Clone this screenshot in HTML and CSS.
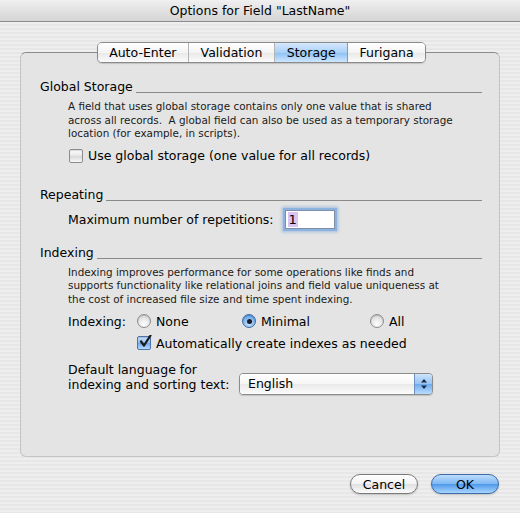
FILE: index.html
```html
<!DOCTYPE html>
<html lang="en">
<head>
    <meta charset="UTF-8">
    <title>Options for Field "LastName"</title>
    <link rel="stylesheet" href="styles.css">
</head>
<body>
    <div class="window">
        <div class="titlebar">Options for Field "LastName"</div>

        <div class="content">
            <div class="panel">
                <div class="tabs">
                    <div class="tab">Auto-Enter</div>
                    <div class="tab">Validation</div>
                    <div class="tab active">Storage</div>
                    <div class="tab">Furigana</div>
                </div>

                <div class="group-title"><span>Global Storage</span><div class="rule"></div></div>
                <p class="note">A field that uses global storage contains only one value that is shared across all records.&nbsp; A global field can also be used as a temporary storage location (for example, in scripts).</p>
                <label class="check-row first">
                    <span class="checkbox"></span>
                    Use global storage (one value for all records)
                </label>

                <div class="group-title repeating"><span>Repeating</span><div class="rule"></div></div>
                <div class="reps-row">
                    <span>Maximum number of repetitions:</span>
                    <div class="num-input"><span class="sel">1</span></div>
                </div>

                <div class="group-title indexing"><span>Indexing</span><div class="rule"></div></div>
                <p class="note">Indexing improves performance for some operations like finds and supports functionality like relational joins and field value uniqueness at the cost of increased file size and time spent indexing.</p>

                <div class="radio-row">
                    <span class="radio-label">Indexing:</span>
                    <label class="radio-opt opt-none"><span class="radio"></span>None</label>
                    <label class="radio-opt opt-min"><span class="radio on"></span>Minimal</label>
                    <label class="radio-opt"><span class="radio"></span>All</label>
                </div>
                <label class="check-row auto">
                    <span class="checkbox on">
                        <svg width="14" height="14" viewBox="0 0 14 14"><path d="M3 6.5 L6 10.5 L12.5 0.5" fill="none" stroke="#1a1a1a" stroke-width="2.2" stroke-linecap="round" stroke-linejoin="round"/></svg>
                    </span>
                    Automatically create indexes as needed
                </label>

                <div class="lang-row">
                    <div class="lang-label">Default language for<br>indexing and sorting text:</div>
                    <div class="popup">
                        <span class="popup-text">English</span>
                        <span class="popup-arrows">
                            <svg width="8" height="12" viewBox="0 0 8 12"><path d="M4 1 L7 4.5 L1 4.5 Z M4 11 L7 7.5 L1 7.5 Z" fill="#1a2a40"/></svg>
                        </span>
                    </div>
                </div>
            </div>

            <div class="buttons">
                <button class="btn">Cancel</button>
                <button class="btn default">OK</button>
            </div>
        </div>
    </div>
</body>
</html>
```

FILE: styles.css
```css
body {
    margin: 0;
    background: #ececec;
    font-family: 'DejaVu Sans', Verdana, sans-serif;
    color: #000;
}

.window {
    width: 520px;
    height: 513px;
    overflow: hidden;
}

.titlebar {
    height: 21px;
    line-height: 22px;
    text-align: center;
    font-size: 12.5px;
    background: linear-gradient(#f0f0f0, #d4d4d4);
    border-bottom: 1px solid #8c8c8c;
}

.content {
    height: 491px;
    padding-top: 30px;
    box-sizing: border-box;
    background: repeating-linear-gradient(#eeeeee 0 2px, #e7e7e7 2px 4px);
}

.panel {
    margin: 0 20px;
    height: 405px;
    box-sizing: border-box;
    padding: 0 17px 0 19px;
    background: #e4e4e4;
    border: 1px solid #c4c4c4;
    border-top-color: #8a8a8a;
    border-radius: 6px;
    font-size: 12.5px;
}

.tabs {
    display: flex;
    width: 329px;
    height: 21px;
    margin: -11px auto 0 57px;
    border: 1px solid #8a8a8a;
    border-radius: 5px;
    overflow: hidden;
    box-sizing: border-box;
    box-shadow: 0 1px 1px rgba(0, 0, 0, 0.15);
}

.tab {
    line-height: 19px;
    text-align: center;
    font-size: 12.5px;
    background: linear-gradient(#ffffff, #f4f4f4 50%, #e8e8e8 51%, #fbfbfb);
    border-right: 1px solid #b4b4b4;
}

.tab:nth-child(1) { width: 91px; }
.tab:nth-child(2) { width: 87px; }
.tab:nth-child(3) { width: 73px; }
.tab:nth-child(4) { width: 78px; border-right: none; }

.tab.active {
    background: linear-gradient(#d6e8fc, #a9d0f7 50%, #8dc0f3 51%, #cfe6ff);
    border-right-color: #7a9cc4;
}

.group-title {
    display: flex;
    height: 16px;
    line-height: 16px;
    margin-top: 16px;
    font-size: 12.5px;
}

.group-title span {
    padding-right: 3px;
}

.rule {
    flex: 1;
    height: 13px;
    border-bottom: 1px solid #8a8a8a;
}

.group-title.repeating { margin-top: 22px; }
.group-title.indexing { margin-top: 14px; }

.note {
    margin: 5px 0 0 28px;
    font-size: 10.4px;
    line-height: 13.5px;
    color: #1a1a1a;
    width: 390px;
}

.check-row {
    display: flex;
    align-items: center;
    height: 18px;
    font-size: 12.5px;
}

.check-row.first {
    margin: 6px 0 0 29px;
}

.check-row.auto {
    margin: 4px 0 0 97px;
}

.checkbox {
    width: 12px;
    height: 12px;
    margin-right: 5px;
    border: 1px solid #8c8c8c;
    border-radius: 2px;
    background: linear-gradient(#ffffff, #e6e6e6 50%, #d8d8d8 51%, #f8f8f8);
    box-shadow: inset 0 1px 1px rgba(0, 0, 0, 0.15);
    position: relative;
}

.checkbox.on {
    background: linear-gradient(#c9e1fb, #8fbdf1 50%, #6aa6ec 51%, #b8dbff);
    border-color: #4d73a8;
}

.checkbox svg {
    position: absolute;
    left: 0;
    top: -2px;
}

.reps-row {
    display: flex;
    align-items: center;
    margin: 5px 0 0 28px;
    height: 23px;
}

.num-input {
    width: 46px;
    height: 17px;
    margin-left: 11px;
    padding-left: 2px;
    background: #fff;
    border: 1px solid #7e8ea8;
    box-shadow: 0 0 0 2px #8cb2e0, 0 0 3px 3px rgba(120, 160, 215, 0.6);
    font-size: 13px;
    line-height: 17px;
}

.sel {
    background: #dcc4f2;
    padding: 0 1px;
}

.radio-row {
    display: flex;
    align-items: center;
    height: 18px;
    margin: 6px 0 0 28px;
}

.radio-label {
    width: 69px;
}

.radio-opt {
    display: flex;
    align-items: center;
}

.opt-none { width: 105px; }
.opt-min { width: 128px; }

.radio {
    width: 12px;
    height: 12px;
    margin-right: 5px;
    border: 1px solid #8c8c8c;
    border-radius: 50%;
    background: radial-gradient(circle at 50% 75%, #ffffff, #e2e2e2 60%, #cfcfcf);
    box-shadow: inset 0 1px 1px rgba(0, 0, 0, 0.15);
    position: relative;
}

.radio.on {
    background: radial-gradient(circle at 50% 75%, #c8e4ff, #79b1ee 60%, #4d8fd9);
    border-color: #3f68a0;
}

.radio.on::after {
    content: "";
    position: absolute;
    left: 3.5px;
    top: 3.5px;
    width: 5px;
    height: 5px;
    border-radius: 50%;
    background: #1a1f2a;
}

.lang-row {
    display: flex;
    align-items: flex-end;
    margin: 10px 0 0 28px;
}

.lang-label {
    line-height: 15px;
    width: 171px;
}

.popup {
    display: flex;
    width: 192px;
    height: 20px;
    border: 1px solid #8c8c8c;
    border-radius: 4px;
    overflow: hidden;
    margin-bottom: -3px;
    box-shadow: 0 1px 1px rgba(0, 0, 0, 0.15);
}

.popup-text {
    flex: 1;
    padding-left: 8px;
    line-height: 20px;
    background: linear-gradient(#ffffff, #f6f6f6 50%, #e9e9e9 51%, #fcfcfc);
}

.popup-arrows {
    width: 17px;
    display: flex;
    align-items: center;
    justify-content: center;
    border-left: 1px solid #6e8fbd;
    background: linear-gradient(#cde4fc, #95c3f4 50%, #6eaaee 51%, #b9dcff);
}

.buttons {
    display: flex;
    justify-content: flex-end;
    gap: 13px;
    margin: 17px 21px 0 0;
}

.btn {
    width: 68px;
    height: 20px;
    padding: 0;
    font-family: 'DejaVu Sans', Verdana, sans-serif;
    font-size: 12.5px;
    color: #000;
    border: 1px solid #7a7a7a;
    border-radius: 10px;
    background: linear-gradient(#ffffff, #f2f2f2 50%, #e0e0e0 51%, #fbfbfb);
    box-shadow: 0 1px 2px rgba(0, 0, 0, 0.2);
}

.btn.default {
    border-color: #3e6aa8;
    background: linear-gradient(#bcdcfd, #7db8f3 50%, #4f98ea 51%, #a8d6ff);
}
```
